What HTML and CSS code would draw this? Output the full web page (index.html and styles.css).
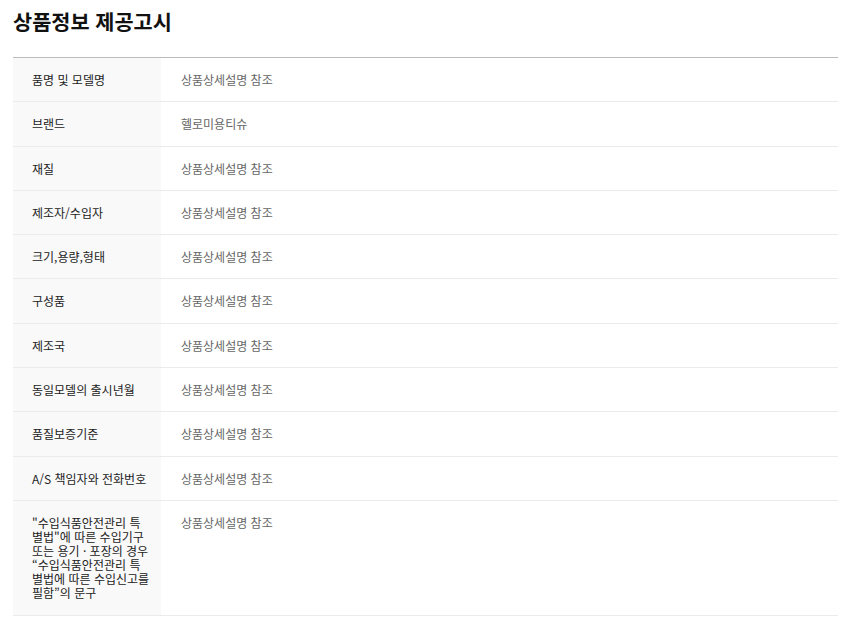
FILE: index.html
```html
<!DOCTYPE html>
<html lang="ko">
<head>
  <meta charset="UTF-8" />
  <meta name="viewport" content="width=device-width, initial-scale=1.0"/>
  <title>상품정보 제공고시</title>
  <link rel="stylesheet" href="styles.css">
</head>
<body>
  <section class="notice">
    <h2 class="notice-title">상품정보 제공고시</h2>

    <table class="notice-table">
      <tbody>
        <tr><th>품명 및 모델명</th><td>상품상세설명 참조</td></tr>
        <tr><th>브랜드</th><td>헬로미용티슈</td></tr>
        <tr><th>재질</th><td>상품상세설명 참조</td></tr>
        <tr><th>제조자/수입자</th><td>상품상세설명 참조</td></tr>
        <tr><th>크기,용량,형태</th><td>상품상세설명 참조</td></tr>
        <tr><th>구성품</th><td>상품상세설명 참조</td></tr>
        <tr><th>제조국</th><td>상품상세설명 참조</td></tr>
        <tr><th>동일모델의 출시년월</th><td>상품상세설명 참조</td></tr>
        <tr><th>품질보증기준</th><td>상품상세설명 참조</td></tr>
        <tr><th>A/S 책임자와 전화번호</th><td>상품상세설명 참조</td></tr>
        <tr><th>"수입식품안전관리 특별법"에 따른 수입기구 또는 용기 · 포장의 경우 “수입식품안전관리 특별법에 따른 수입신고를 필함”의 문구</th><td>상품상세설명 참조</td></tr>
      </tbody>
    </table>
  </section>
</body>
</html>
```

FILE: styles.css
```css
body {
  margin: 0;
  padding: 0;
  background-color: #fff;
  color: #222;
  font-family: "Noto Sans CJK KR", "Noto Sans", sans-serif;
}

.notice {
  padding: 7px 18px 0 13px;
}

.notice-title {
  margin: 0 0 22px;
  font-size: 20.8px;
  font-weight: bold;
  line-height: 28px;
  color: #111;
}

.notice-table {
  width: 100%;
  border-collapse: collapse;
  border-top: 1px solid #bbb;
  font-size: 12px;
  line-height: 14.1px;
}

.notice-table th,
.notice-table td {
  text-align: left;
  vertical-align: top;
  padding: 15px 20px 14.2px;
  border-bottom: 1px solid #ebebeb;
}

.notice-table th {
  width: 117.5px;
  padding-left: 19px;
  padding-right: 11.5px;
  background-color: #f9f9f9;
  color: #222;
  font-weight: normal;
}

.notice-table td {
  color: #666;
  font-weight: normal;
}
```
